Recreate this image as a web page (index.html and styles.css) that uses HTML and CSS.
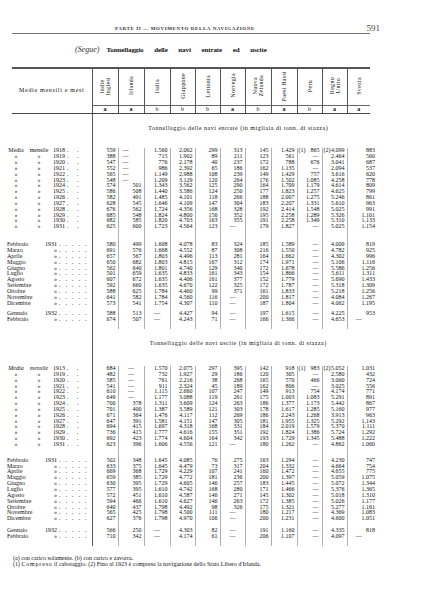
FILE: index.html
```html
<!DOCTYPE html>
<html lang="it">
<head>
<meta charset="utf-8">
<title>Parte II — Movimento della navigazione</title>
<link rel="stylesheet" href="styles.css">
</head>
<body>
<div class="page">
  <div class="runhead"><span class="rh-title">Parte II — Movimento della navigazione</span><span class="pn">591</span></div>
  <div class="rule"></div>
  <div class="title"><em>(Segue)</em><b>Tonnellaggio delle navi entrate ed uscite</b></div>

  <table class="tab">
    <colgroup>
      <col class="cl">
      <col class="cd w26"><col class="cd w26"><col class="cd w26"><col class="cd w25"><col class="cd w25"><col class="cd w25"><col class="cd w26"><col class="cd w26"><col class="cd w25"><col class="cd w25"><col class="cz w23">
    </colgroup>
    <thead>
      <tr class="hd">
        <th class="lab-h" rowspan="2">Medie mensili e mesi</th>
        <th><span class="rot">Indie<br>Inglesi</span></th>
        <th><span class="rot">Irlanda</span></th>
        <th><span class="rot">Italia</span></th>
        <th><span class="rot">Giappone</span></th>
        <th><span class="rot">Lettonia</span></th>
        <th><span class="rot">Norvegia</span></th>
        <th><span class="rot">Nuova<br>Zelanda</span></th>
        <th><span class="rot">Paesi Bassi</span></th>
        <th><span class="rot">Perù</span></th>
        <th><span class="rot">Regno<br>Unito</span></th>
        <th class="last"><span class="rot">Svezia</span></th>
      </tr>
      <tr class="ab">
        <th class="a">a</th><th class="a">a</th><th>b</th><th>b</th><th>b</th><th class="a">a</th><th>b</th><th class="a">a</th><th>b</th><th class="a">a</th><th class="a last">a</th>
      </tr>
    </thead>
    <tbody>
      <tr class="sect"><td class="lab"></td><td class="st" colspan="11">Tonnellaggio delle navi entrate (in migliaia di tonn. di stazza)</td></tr>

      <tr><td class="lab"><span class="c1">Media</span><span class="c2">mensile</span><span class="c3">1918</span><span class="c4">. .</span></td><td>559</td><td class="dl">—</td><td>1.560</td><td>2.062</td><td>299</td><td>313</td><td>145</td><td>1.429</td><td><span class="fn">(1)</span>865</td><td><span class="fn">(2)</span>4.099</td><td class="sv"><span>883</span></td></tr>
      <tr><td class="lab"><span class="c1">»</span><span class="c2">»</span><span class="c3">1919</span><span class="c4">. .</span></td><td>388</td><td class="dl">—</td><td>715</td><td>1.902</td><td>89</td><td>211</td><td>123</td><td>561</td><td class="dr">—</td><td>2.464</td><td class="sv"><span>560</span></td></tr>
      <tr><td class="lab"><span class="c1">»</span><span class="c2">»</span><span class="c3">1920</span><span class="c4">. .</span></td><td>547</td><td class="dl">—</td><td>776</td><td>2.178</td><td>40</td><td>237</td><td>172</td><td>788</td><td>676</td><td>3.041</td><td class="sv"><span>687</span></td></tr>
      <tr><td class="lab"><span class="c1">»</span><span class="c2">»</span><span class="c3">1921</span><span class="c4">. .</span></td><td>552</td><td class="dl">—</td><td>986</td><td>2.392</td><td>65</td><td>186</td><td>162</td><td>1.135</td><td class="dr">—</td><td>2.094</td><td class="sv"><span>537</span></td></tr>
      <tr><td class="lab"><span class="c1">»</span><span class="c2">»</span><span class="c3">1922</span><span class="c4">. .</span></td><td>565</td><td class="dl">—</td><td>1.149</td><td>2.988</td><td>108</td><td>239</td><td>149</td><td>1.429</td><td>757</td><td>3.616</td><td class="sv"><span>620</span></td></tr>
      <tr><td class="lab"><span class="c1">»</span><span class="c2">»</span><span class="c3">1923</span><span class="c4">. .</span></td><td>548</td><td class="dl">—</td><td>1.209</td><td>3.129</td><td>120</td><td>264</td><td>176</td><td>1.502</td><td>1.085</td><td>4.258</td><td class="sv"><span>778</span></td></tr>
      <tr><td class="lab"><span class="c1">»</span><span class="c2">»</span><span class="c3">1924</span><span class="c4">. .</span></td><td>574</td><td>501</td><td>1.343</td><td>3.562</td><td>125</td><td>290</td><td>164</td><td>1.709</td><td>1.179</td><td>4.614</td><td class="sv"><span>809</span></td></tr>
      <tr><td class="lab"><span class="c1">»</span><span class="c2">»</span><span class="c3">1925</span><span class="c4">. .</span></td><td>586</td><td>508</td><td>1.440</td><td>3.586</td><td>124</td><td>250</td><td>177</td><td>1.823</td><td>1.257</td><td>4.625</td><td class="sv"><span>799</span></td></tr>
      <tr><td class="lab"><span class="c1">»</span><span class="c2">»</span><span class="c3">1926</span><span class="c4">. .</span></td><td>582</td><td>491</td><td>1.485</td><td>4.101</td><td>118</td><td>266</td><td>188</td><td>2.007</td><td>1.275</td><td>5.246</td><td class="sv"><span>861</span></td></tr>
      <tr><td class="lab"><span class="c1">»</span><span class="c2">»</span><span class="c3">1927</span><span class="c4">. .</span></td><td>628</td><td>545</td><td>1.646</td><td>4.109</td><td>147</td><td>304</td><td>183</td><td>2.207</td><td>1.331</td><td>5.610</td><td class="sv"><span>963</span></td></tr>
      <tr><td class="lab"><span class="c1">»</span><span class="c2">»</span><span class="c3">1928</span><span class="c4">. .</span></td><td>676</td><td>562</td><td>1.724</td><td>4.356</td><td>168</td><td>328</td><td>192</td><td>2.414</td><td>1.548</td><td>5.025</td><td class="sv"><span>991</span></td></tr>
      <tr><td class="lab"><span class="c1">»</span><span class="c2">»</span><span class="c3">1929</span><span class="c4">. .</span></td><td>685</td><td>548</td><td>1.824</td><td>4.800</td><td>156</td><td>352</td><td>195</td><td>2.258</td><td>1.289</td><td>5.326</td><td class="sv"><span>1.101</span></td></tr>
      <tr><td class="lab"><span class="c1">»</span><span class="c2">»</span><span class="c3">1930</span><span class="c4">. .</span></td><td>682</td><td>585</td><td>1.820</td><td>4.703</td><td>163</td><td>355</td><td>191</td><td>2.258</td><td>1.349</td><td>5.310</td><td class="sv"><span>1.133</span></td></tr>
      <tr><td class="lab"><span class="c1">»</span><span class="c2">»</span><span class="c3">1931</span><span class="c4">. .</span></td><td>625</td><td>600</td><td>1.723</td><td>4.564</td><td>123</td><td class="d">—</td><td>179</td><td>1.827</td><td class="dr">—</td><td>5.025</td><td class="sv"><span>1.154</span></td></tr>

      <tr class="gap12"><td class="lab"><span class="m1">Febbraio</span><span class="m2">1931</span><span class="m3">. . . . .</span></td><td>580</td><td>499</td><td>1.608</td><td>4.078</td><td>83</td><td>324</td><td>185</td><td>1.589</td><td class="dr">—</td><td>4.009</td><td class="sv"><span>819</span></td></tr>
      <tr><td class="lab"><span class="m1">Marzo</span><span class="m2">»</span><span class="m3">. . . . .</span></td><td>691</td><td>576</td><td>1.668</td><td>4.552</td><td>87</td><td>308</td><td>216</td><td>1.550</td><td class="dr">—</td><td>4.782</td><td class="sv"><span>925</span></td></tr>
      <tr><td class="lab"><span class="m1">Aprile</span><span class="m2">»</span><span class="m3">. . . . .</span></td><td>657</td><td>567</td><td>1.803</td><td>4.496</td><td>113</td><td>281</td><td>164</td><td>1.662</td><td class="dr">—</td><td>4.302</td><td class="sv"><span>996</span></td></tr>
      <tr><td class="lab"><span class="m1">Maggio</span><span class="m2">»</span><span class="m3">. . . . .</span></td><td>650</td><td>682</td><td>1.803</td><td>4.815</td><td>167</td><td>312</td><td>174</td><td>1.971</td><td class="dr">—</td><td>5.106</td><td class="sv"><span>1.116</span></td></tr>
      <tr><td class="lab"><span class="m1">Giugno</span><span class="m2">»</span><span class="m3">. . . . .</span></td><td>562</td><td>640</td><td>1.801</td><td>4.740</td><td>129</td><td>340</td><td>172</td><td>1.678</td><td class="dr">—</td><td>5.586</td><td class="sv"><span>1.256</span></td></tr>
      <tr><td class="lab"><span class="m1">Luglio</span><span class="m2">»</span><span class="m3">. . . . .</span></td><td>501</td><td>659</td><td>1.635</td><td>4.833</td><td>161</td><td>343</td><td>154</td><td>1.866</td><td class="dr">—</td><td>5.611</td><td class="sv"><span>1.311</span></td></tr>
      <tr><td class="lab"><span class="m1">Agosto</span><span class="m2">»</span><span class="m3">. . . . .</span></td><td>607</td><td>672</td><td>1.635</td><td>4.406</td><td>161</td><td>377</td><td>152</td><td>1.779</td><td class="dr">—</td><td>5.690</td><td class="sv"><span>1.433</span></td></tr>
      <tr><td class="lab"><span class="m1">Settembre</span><span class="m2">»</span><span class="m3">. . . . .</span></td><td>592</td><td>660</td><td>1.635</td><td>4.670</td><td>122</td><td>325</td><td>172</td><td>1.787</td><td class="dr">—</td><td>5.318</td><td class="sv"><span>1.309</span></td></tr>
      <tr><td class="lab"><span class="m1">Ottobre</span><span class="m2">»</span><span class="m3">. . . . .</span></td><td>588</td><td>625</td><td>1.784</td><td>4.460</td><td>99</td><td>371</td><td>161</td><td>1.833</td><td class="dr">—</td><td>5.218</td><td class="sv"><span>1.256</span></td></tr>
      <tr><td class="lab"><span class="m1">Novembre</span><span class="m2">»</span><span class="m3">. . . . .</span></td><td>641</td><td>582</td><td>1.784</td><td>4.560</td><td>116</td><td class="d">—</td><td>200</td><td>1.817</td><td class="dr">—</td><td>4.084</td><td class="sv"><span>1.267</span></td></tr>
      <tr><td class="lab"><span class="m1">Dicembre</span><span class="m2">»</span><span class="m3">. . . . .</span></td><td>573</td><td>541</td><td>1.754</td><td>4.307</td><td>110</td><td class="d">—</td><td>187</td><td>1.804</td><td class="dr">—</td><td>4.062</td><td class="sv"><span>1.195</span></td></tr>
      <tr class="gap5"><td class="lab"><span class="m1">Gennaio</span><span class="m2">1932</span><span class="m3">. . . . .</span></td><td>588</td><td>513</td><td class="d">—</td><td>4.427</td><td>94</td><td class="d">—</td><td>197</td><td>1.615</td><td class="dr">—</td><td>4.225</td><td class="sv"><span>953</span></td></tr>
      <tr class="end"><td class="lab"><span class="m1">Febbraio</span><span class="m2">»</span><span class="m3">. . . . .</span></td><td>674</td><td>507</td><td class="d">—</td><td>4.243</td><td>71</td><td class="d">—</td><td>166</td><td>1.366</td><td class="dr">—</td><td>4.653</td><td class="d">—</td></tr>

      <tr class="sect sect2"><td class="lab"></td><td class="st" colspan="11">Tonnellaggio delle navi uscite (in migliaia di tonn. di stazza)</td></tr>

      <tr><td class="lab"><span class="c1 it">Media</span><span class="c2 it">mensile</span><span class="c3">1913</span><span class="c4">. .</span></td><td>684</td><td class="d">—</td><td>1.570</td><td>2.075</td><td>297</td><td>395</td><td>142</td><td>918</td><td><span class="fn">(1)</span>983</td><td><span class="fn">(2)</span>5.052</td><td class="sv"><span>1.031</span></td></tr>
      <tr><td class="lab"><span class="c1">»</span><span class="c2">»</span><span class="c3">1919</span><span class="c4">. .</span></td><td>482</td><td class="d">—</td><td>732</td><td>1.927</td><td>29</td><td>186</td><td>120</td><td>305</td><td class="dr">—</td><td>2.580</td><td class="sv"><span>432</span></td></tr>
      <tr><td class="lab"><span class="c1">»</span><span class="c2">»</span><span class="c3">1920</span><span class="c4">. .</span></td><td>585</td><td class="d">—</td><td>761</td><td>2.216</td><td>38</td><td>268</td><td>165</td><td>570</td><td>466</td><td>3.060</td><td class="sv"><span>724</span></td></tr>
      <tr><td class="lab"><span class="c1">»</span><span class="c2">»</span><span class="c3">1921</span><span class="c4">. .</span></td><td>541</td><td class="d">—</td><td>911</td><td>2.324</td><td>45</td><td>189</td><td>162</td><td>806</td><td class="dr">—</td><td>3.025</td><td class="sv"><span>556</span></td></tr>
      <tr><td class="lab"><span class="c1">»</span><span class="c2">»</span><span class="c3">1922</span><span class="c4">. .</span></td><td>610</td><td class="d">—</td><td>1.115</td><td>2.660</td><td>107</td><td>247</td><td>149</td><td>913</td><td>754</td><td>4.174</td><td class="sv"><span>771</span></td></tr>
      <tr><td class="lab"><span class="c1">»</span><span class="c2">»</span><span class="c3">1923</span><span class="c4">. .</span></td><td>649</td><td class="d">—</td><td>1.177</td><td>3.088</td><td>119</td><td>261</td><td>175</td><td>1.003</td><td>1.083</td><td>5.291</td><td class="sv"><span>891</span></td></tr>
      <tr><td class="lab"><span class="c1">»</span><span class="c2">»</span><span class="c3">1924</span><span class="c4">. .</span></td><td>700</td><td>378</td><td>1.311</td><td>3.609</td><td>124</td><td>263</td><td>186</td><td>1.377</td><td>1.173</td><td>5.442</td><td class="sv"><span>867</span></td></tr>
      <tr><td class="lab"><span class="c1">»</span><span class="c2">»</span><span class="c3">1925</span><span class="c4">. .</span></td><td>701</td><td>400</td><td>1.387</td><td>3.589</td><td>121</td><td>303</td><td>178</td><td>1.617</td><td>1.285</td><td>5.160</td><td class="sv"><span>977</span></td></tr>
      <tr><td class="lab"><span class="c1">»</span><span class="c2">»</span><span class="c3">1926</span><span class="c4">. .</span></td><td>671</td><td>364</td><td>1.476</td><td>4.117</td><td>112</td><td>269</td><td>186</td><td>2.243</td><td>1.268</td><td>3.913</td><td class="sv"><span>963</span></td></tr>
      <tr><td class="lab"><span class="c1">»</span><span class="c2">»</span><span class="c3">1927</span><span class="c4">. .</span></td><td>647</td><td>391</td><td>1.581</td><td>4.151</td><td>147</td><td>305</td><td>181</td><td>1.955</td><td>1.325</td><td>5.292</td><td class="sv"><span>1.143</span></td></tr>
      <tr><td class="lab"><span class="c1">»</span><span class="c2">»</span><span class="c3">1928</span><span class="c4">. .</span></td><td>694</td><td>415</td><td>1.697</td><td>4.318</td><td>168</td><td>331</td><td>184</td><td>2.019</td><td>1.579</td><td>5.370</td><td class="sv"><span>1.111</span></td></tr>
      <tr><td class="lab"><span class="c1">»</span><span class="c2">»</span><span class="c3">1929</span><span class="c4">. .</span></td><td>736</td><td>415</td><td>1.777</td><td>4.616</td><td>155</td><td>351</td><td>192</td><td>1.824</td><td>1.386</td><td>5.724</td><td class="sv"><span>1.292</span></td></tr>
      <tr><td class="lab"><span class="c1">»</span><span class="c2">»</span><span class="c3">1930</span><span class="c4">. .</span></td><td>692</td><td>423</td><td>1.774</td><td>4.604</td><td>164</td><td>342</td><td>193</td><td>1.729</td><td>1.345</td><td>5.488</td><td class="sv"><span>1.222</span></td></tr>
      <tr><td class="lab"><span class="c1">»</span><span class="c2">»</span><span class="c3">1931</span><span class="c4">. .</span></td><td>623</td><td>396</td><td>1.606</td><td>4.556</td><td>121</td><td class="d">—</td><td>180</td><td>1.262</td><td class="dr">—</td><td>4.862</td><td class="sv"><span>1.060</span></td></tr>

      <tr class="gap10"><td class="lab"><span class="m1">Febbraio</span><span class="m2">1931</span><span class="m3">. . . . .</span></td><td>502</td><td>348</td><td>1.645</td><td>4.085</td><td>76</td><td>275</td><td>163</td><td>1.294</td><td class="dr">—</td><td>4.230</td><td class="sv"><span>747</span></td></tr>
      <tr><td class="lab"><span class="m1">Marzo</span><span class="m2">»</span><span class="m3">. . . . .</span></td><td>633</td><td>375</td><td>1.645</td><td>4.479</td><td>73</td><td>317</td><td>204</td><td>1.332</td><td class="dr">—</td><td>4.664</td><td class="sv"><span>754</span></td></tr>
      <tr><td class="lab"><span class="m1">Aprile</span><span class="m2">»</span><span class="m3">. . . . .</span></td><td>669</td><td>368</td><td>1.729</td><td>4.229</td><td>107</td><td>241</td><td>160</td><td>1.472</td><td class="dr">—</td><td>4.655</td><td class="sv"><span>775</span></td></tr>
      <tr><td class="lab"><span class="m1">Maggio</span><span class="m2">»</span><span class="m3">. . . . .</span></td><td>659</td><td>385</td><td>1.729</td><td>4.772</td><td>181</td><td>236</td><td>200</td><td>1.397</td><td class="dr">—</td><td>5.059</td><td class="sv"><span>1.075</span></td></tr>
      <tr><td class="lab"><span class="m1">Giugno</span><span class="m2">»</span><span class="m3">. . . . .</span></td><td>630</td><td>395</td><td>1.729</td><td>4.605</td><td>146</td><td>257</td><td>183</td><td>1.445</td><td class="dr">—</td><td>5.072</td><td class="sv"><span>1.344</span></td></tr>
      <tr><td class="lab"><span class="m1">Luglio</span><span class="m2">»</span><span class="m3">. . . . .</span></td><td>577</td><td>395</td><td>1.610</td><td>4.742</td><td>168</td><td>280</td><td>171</td><td>1.466</td><td class="dr">—</td><td>5.376</td><td class="sv"><span>1.365</span></td></tr>
      <tr><td class="lab"><span class="m1">Agosto</span><span class="m2">»</span><span class="m3">. . . . .</span></td><td>572</td><td>451</td><td>1.610</td><td>4.587</td><td>146</td><td>271</td><td>145</td><td>1.302</td><td class="dr">—</td><td>5.018</td><td class="sv"><span>1.310</span></td></tr>
      <tr><td class="lab"><span class="m1">Settembre</span><span class="m2">»</span><span class="m3">. . . . .</span></td><td>594</td><td>466</td><td>1.610</td><td>4.627</td><td>146</td><td>263</td><td>172</td><td>1.385</td><td class="dr">—</td><td>5.026</td><td class="sv"><span>1.177</span></td></tr>
      <tr><td class="lab"><span class="m1">Ottobre</span><span class="m2">»</span><span class="m3">. . . . .</span></td><td>640</td><td>437</td><td>1.798</td><td>4.492</td><td>98</td><td>326</td><td>175</td><td>1.321</td><td class="dr">—</td><td>5.277</td><td class="sv"><span>1.161</span></td></tr>
      <tr><td class="lab"><span class="m1">Novembre</span><span class="m2">»</span><span class="m3">. . . . .</span></td><td>565</td><td>425</td><td>1.798</td><td>4.500</td><td>111</td><td class="d">—</td><td>180</td><td>1.217</td><td class="dr">—</td><td>4.369</td><td class="sv"><span>1.083</span></td></tr>
      <tr><td class="lab"><span class="m1">Dicembre</span><span class="m2">»</span><span class="m3">. . . . .</span></td><td>627</td><td>376</td><td>1.798</td><td>4.970</td><td>106</td><td class="d">—</td><td>200</td><td>1.231</td><td class="dr">—</td><td>4.600</td><td class="sv"><span>1.051</span></td></tr>
      <tr class="gap6"><td class="lab"><span class="m1">Gennaio</span><span class="m2">1932</span><span class="m3">. . . . .</span></td><td>566</td><td>250</td><td class="d">—</td><td>4.303</td><td>82</td><td class="d">—</td><td>191</td><td>1.160</td><td class="dr">—</td><td>4.335</td><td class="sv"><span>818</span></td></tr>
      <tr class="end"><td class="lab"><span class="m1">Febbraio</span><span class="m2">»</span><span class="m3">. . . . .</span></td><td>710</td><td>342</td><td class="d">—</td><td>4.174</td><td>61</td><td class="d">—</td><td>206</td><td>1.107</td><td class="dr">—</td><td>4.097</td><td class="d">—</td></tr>
    </tbody>
  </table>

  <div class="notes">
    <p>(a) con carico solamente. (b) con carico e zavorra.</p>
    <p>(1) <span class="sp">Compreso</span> il cabotaggio. (2) Fino al 1923 è compresa la navigazione dello Stato Libero d'Irlanda.</p>
  </div>
</div>
</body>
</html>
```

FILE: styles.css
```css
* { box-sizing: border-box; }

body {
  margin: 0;
  background: #ffffff;
  color: #111111;
  font-family: "Liberation Serif", "DejaVu Serif", serif;
}

.page {
  width: 424px;
  height: 602px;
  overflow: hidden;
  background: #ffffff;
}

/* running head */
.runhead {
  display: flex;
  align-items: center;
  width: 265px;
  height: 33px;
  margin-left: 115px;
  padding-top: 24px;
}
.rh-title {
  font-size: 5px;
  line-height: 9px;
  font-weight: bold;
  letter-spacing: 0.6px;
  text-transform: uppercase;
  color: #333;
}
.pn {
  margin-left: auto;
  font-size: 9px;
  line-height: 9px;
  color: #444;
}
.rule {
  width: 358px;
  height: 1px;
  margin-left: 12px;
  background: #777;
}

/* title */
.title {
  height: 10px;
  margin: 11px 0 0 75px;
  font-size: 8px;
  line-height: 10px;
  white-space: nowrap;
}
.title em {
  font-weight: normal;
  margin-right: 7px;
  color: #333;
}
.title b {
  font-size: 7px;
  letter-spacing: -0.1px;
  word-spacing: 9px;
}

/* table */
.tab {
  margin: 12px 0 0 12px;
  width: 358px;
  table-layout: fixed;
  border-collapse: collapse;
  font-size: 6px;
  line-height: 5.85px;
}
col.cl { width: 80px; border-right: 1px solid #555; }
col.cd { border-right: 1px solid #b0b0b0; }
col.w26 { width: 26px; }
col.w25 { width: 25px; }
col.w23 { width: 23px; }

.tab th {
  padding: 0;
  font-weight: normal;
  text-align: center;
  vertical-align: middle;
  border-right: 1px solid #555;
}
.tab th.last { border-right: 0; }
.hd th {
  height: 37px;
  border-top: 2px solid #555;
}
.lab-h {
  letter-spacing: 0.7px;
  border-bottom: 1px solid #444;
}
.rot {
  display: inline-block;
  writing-mode: vertical-rl;
  transform: rotate(180deg);
  line-height: 6px;
  letter-spacing: 0.3px;
  text-align: center;
  white-space: nowrap;
}
.ab th {
  height: 8px;
  line-height: 7px;
  border-top: 1px solid #666;
  border-bottom: 1px solid #444;
}
.ab th.a { font-weight: bold; }

.tab td {
  padding: 0 2px 0 0;
  text-align: right;
  white-space: nowrap;
  vertical-align: top;
}
.tab td.lab {
  padding: 0;
  text-align: left;
  text-indent: -5px;
}
.lab span {
  display: inline-block;
  text-indent: 0;
  vertical-align: top;
}
.c1 { width: 18px; text-align: center; }
.c2 { width: 28px; text-align: center; }
.c3 { width: 12px; }
.c4 { padding-left: 2px; word-spacing: 7px; }
.it { font-style: italic; }
.m1 { width: 38px; }
.m2 { width: 12px; text-align: right; }
.m3 { padding-left: 2px; word-spacing: 3.5px; }

.fn { float: left; padding-left: 1px; }
.tab td.sv span {
  display: inline-block;
  margin-right: -7px;
}
.tab td.d { padding: 0; text-align: center; }
.tab td.dl { padding: 0 0 0 4px; text-align: left; }
.tab td.dr { padding: 0 3px 0 0; text-align: right; }

.tab td.st {
  padding: 12px 0 17px 14px;
  text-align: center;
  letter-spacing: 0.5px;
}
.tab .sect2 td.st { padding-top: 12px; padding-bottom: 19px; }

/* vertical rhythm between row groups (applies to every cell of the row) */
.tab tr.gap12 td { padding-top: 12px; }
.tab tr.gap10 td { padding-top: 10px; }
.tab tr.gap6 td { padding-top: 6px; }
.tab tr.gap5 td { padding-top: 5px; }
.tab tr.end td { padding-bottom: 6px; }

/* footnotes */
.notes {
  margin: 9px 0 0 13px;
  font-size: 6px;
  line-height: 6px;
}
.notes p { margin: 0; white-space: nowrap; }
.notes .sp { letter-spacing: 0.8px; }
```
